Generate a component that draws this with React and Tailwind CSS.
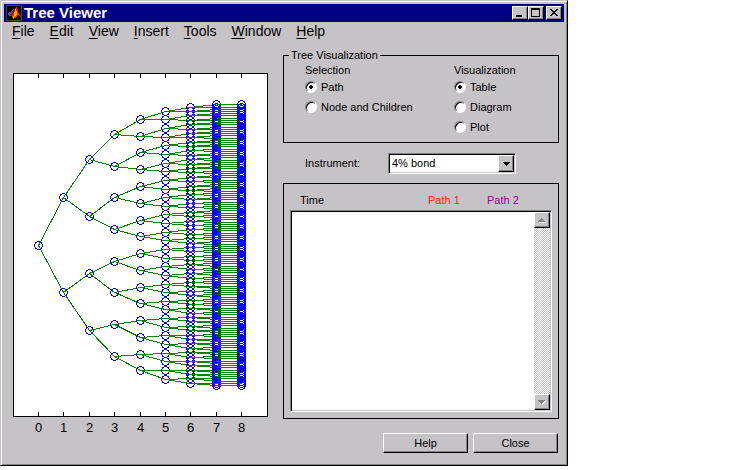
import React from "react";

const menus = ["File", "Edit", "View", "Insert", "Tools", "Window", "Help"];

const raised =
  "border border-t-white border-l-white border-r-black border-b-black bg-[#c6c3c6] shadow-[inset_-1px_-1px_0_#848284]";
const sunken =
  "border border-t-[#848284] border-l-[#848284] border-r-white border-b-white bg-white shadow-[inset_1px_1px_0_#000,inset_-1px_-1px_0_#c6c3c6]";

const columnX = [38, 63, 89, 114, 140, 165, 190, 216, 241];
const MID_Y = 244.7;
const SPREAD = 285;

// Nodes double at every level up to level 7; the last level keeps one child each.
function levelNodes(level) {
  const count = 2 ** Math.min(level, 7);
  return Array.from({ length: count }, (_, i) =>
    Math.round(MID_Y + ((i - (count - 1) / 2) * SPREAD) / (count + 1))
  );
}

const levels = columnX.map((x, level) => ({ x, ys: levelNodes(level) }));

function ringPath(x, y) {
  return (
    `M${x - 1} ${y - 4}h3v1h-3z` +
    `M${x - 3} ${y - 3}h2v1h-1v1h-1zM${x + 2} ${y - 3}h2v2h-1v-1h-1z` +
    `M${x - 4} ${y - 1}h1v3h-1zM${x + 4} ${y - 1}h1v3h-1z` +
    `M${x - 3} ${y + 2}h1v1h1v1h-2zM${x + 3} ${y + 2}h1v2h-2v-1h1z` +
    `M${x - 1} ${y + 4}h3v1h-3z`
  );
}

function branchPath(level) {
  const from = levels[level];
  const to = levels[level + 1];
  return to.ys
    .map((y, i) => {
      const parent = to.ys.length === from.ys.length ? i : Math.floor(i / 2);
      return `M${from.x + 0.5} ${from.ys[parent] + 0.5}L${to.x + 0.5} ${y + 0.5}`;
    })
    .join("");
}

function TreePlot() {
  return (
    <svg
      viewBox="13 73 255 364"
      className="block w-[255px] shrink-0"
      role="img"
      aria-label="Tree"
      shapeRendering="crispEdges"
    >
      <rect x="13.5" y="73.5" width="254" height="343" fill="#fff" stroke="#000" />
      {levels.map(({ x, ys }, level) => (
        <g key={level}>
          <path d={`M${x + 0.5} 74v4M${x + 0.5} 412v4`} stroke="#000" />
          <path d={ys.map((y) => ringPath(x, y)).join("")} fill="#0000ff" />
          {level < 8 && <path d={branchPath(level)} stroke="#008200" fill="none" />}
        </g>
      ))}
      {levels.map(({ x }, level) => (
        <text
          key={level}
          x={x + 0.5}
          y="432"
          textAnchor="middle"
          className="text-[13px]"
        >
          {level}
        </text>
      ))}
    </svg>
  );
}

function AppIcon() {
  return (
    <svg viewBox="0 0 16 16" className="h-4 w-4 shrink-0" shapeRendering="crispEdges" aria-hidden="true">
      <rect width="16" height="16" fill="#424142" />
      <rect x="1" y="1" width="14" height="14" fill="#000" />
      <path d="M1 9l3-2 2-2 2-1-2 6-2 1z" fill="#3161ce" />
      <path d="M5 8l3-4 2-2 1 2-3 7-2 1-2-2z" fill="#c60000" />
      <path d="M8 7l2-5 1 1 4 9-3-2-3 3-2 1-1-3z" fill="#ff2000" />
      <path d="M9 5l1-2 1 6-2 3-2 1z" fill="#ffc300" />
      <path d="M11 3l4 8-2-1z" fill="#840000" />
    </svg>
  );
}

function CaptionButton({ label, children }) {
  return (
    <button type="button" aria-label={label} className={`h-[14px] w-4 ${raised}`}>
      <svg viewBox="0 0 14 12" className="block h-3 w-[14px]" shapeRendering="crispEdges" fill="#000">
        {children}
      </svg>
    </button>
  );
}

function TitleBar() {
  return (
    <header className="flex h-[18px] items-center bg-[#000084] px-[2px] text-white">
      <AppIcon />
      <h1 className="flex-1 pl-[2px] text-[15px] leading-[18px] font-bold">Tree Viewer</h1>
      <div className="flex gap-[2px]">
        <div className="flex">
          <CaptionButton label="Minimize">
            <path d="M3 8h6v2H3z" />
          </CaptionButton>
          <CaptionButton label="Maximize">
            <path fillRule="evenodd" d="M2 1h9v9H2zM3 3v6h7V3z" />
          </CaptionButton>
        </div>
        <CaptionButton label="Close window">
          <path d="M3 2h2v1h1v1h2V3h1V2h2v1h-1v1H9v1H8v1h1v1h1v1h1v1H9V8H8V7H6v1H5v1H3V8h1V7h1V6h1V5H5V4H4V3H3z" />
        </CaptionButton>
      </div>
    </header>
  );
}

function Option({ name, label, checked }) {
  return (
    <label className="flex h-5 items-center gap-1">
      <input
        type="radio"
        name={name}
        defaultChecked={checked}
        className="h-3 w-3 appearance-none rounded-full border border-t-[#848284] border-l-[#848284] border-r-white border-b-white bg-white shadow-[inset_1px_1px_0_#000] checked:bg-[radial-gradient(circle,#000_2px,#fff_2px)]"
      />
      {label}
    </label>
  );
}

function OptionGroup({ title, name, options }) {
  return (
    <div role="radiogroup" aria-label={title}>
      <p className="leading-[14px]">{title}</p>
      {options.map((option, i) => (
        <Option key={option} name={name} label={option} checked={i === 0} />
      ))}
    </div>
  );
}

function ScrollButton({ label, down }) {
  return (
    <button type="button" aria-label={label} className={`flex h-4 w-4 items-center justify-center ${raised}`}>
      <svg viewBox="0 0 8 5" className="h-[5px] w-2" shapeRendering="crispEdges">
        <path d={down ? "M1 1h7v1h-1v1h-1v1h-1v1h-1z" : "M1 4h7v1h-7z"} fill="#fff" />
        <path
          d={down ? "M0 0h7v1h-1v1h-1v1h-1v1h-1v-1h-1v-1h-1v-1h-1z" : "M3 0h1v1h1v1h1v1h1v1h-7v-1h1v-1h1v-1h1z"}
          fill="#848284"
        />
      </svg>
    </button>
  );
}

function PathPanel() {
  return (
    <section className="mt-[9px] flex flex-1 flex-col border border-black px-[6px] pt-[9px] pb-[6px]">
      <div className="flex h-[17px] items-start pl-[10px] leading-[14px]">
        <span className="flex-1">Time</span>
        <span className="w-[59px] text-[#ff2800]">Path 1</span>
        <span className="w-[65px] text-[#9c009c]">Path 2</span>
      </div>
      <div className={`flex flex-1 p-px ${sunken}`}>
        <select
          multiple
          aria-label="Path values"
          className="min-w-0 flex-1 appearance-none bg-transparent outline-none"
        />
        <div className="flex flex-col justify-between bg-[repeating-conic-gradient(#c6c3c6_0_25%,#fff_0_50%)] bg-[length:2px_2px]">
          <ScrollButton label="Scroll up" />
          <ScrollButton label="Scroll down" down />
        </div>
      </div>
    </section>
  );
}

function Controls() {
  return (
    <form className="flex min-w-0 flex-1 flex-col text-[11px]" onSubmit={(e) => e.preventDefault()}>
      <fieldset className="h-[95px] border border-black pl-[21px]">
        <legend className="-ml-4 px-[2px] leading-[14px]">Tree Visualization</legend>
        <div className="flex pt-px">
          <div className="flex-1">
            <OptionGroup title="Selection" name="selection" options={["Path", "Node and Children"]} />
          </div>
          <div className="w-[104px]">
            <OptionGroup title="Visualization" name="visualization" options={["Table", "Diagram", "Plot"]} />
          </div>
        </div>
      </fieldset>

      <div className="mt-[10px] flex items-center pr-[43px] pl-[22px]">
        <label htmlFor="instrument" className="flex-1">
          Instrument:
        </label>
        <div className={`relative h-[21px] w-[128px] p-px ${sunken}`}>
          <select
            id="instrument"
            className="block h-full w-full appearance-none bg-transparent pl-[2px] outline-none"
          >
            <option>4% bond</option>
          </select>
          <span
            className={`pointer-events-none absolute inset-y-px right-px flex w-4 items-center justify-center ${raised}`}
          >
            <svg viewBox="0 0 7 4" className="h-1 w-[7px]" shapeRendering="crispEdges" aria-hidden="true">
              <path d="M0 0h7v1h-1v1h-1v1h-1v1h-1v-1h-1v-1h-1v-1h-1z" />
            </svg>
          </span>
        </div>
      </div>

      <PathPanel />

      <div className="mt-[14px] flex justify-end gap-[5px] pr-px">
        <button type="button" className={`h-5 w-[85px] ${raised}`}>
          Help
        </button>
        <button type="button" className={`h-5 w-[85px] ${raised}`}>
          Close
        </button>
      </div>
    </form>
  );
}

export default function App() {
  return (
    <main className="min-h-screen bg-white font-['Liberation_Sans',Arial,sans-serif] text-black">
      <div className="w-full max-w-[568px] border border-t-[#c6c3c6] border-l-[#c6c3c6] border-r-black border-b-black bg-[#c6c3c6] p-[3px] shadow-[inset_1px_1px_0_#fff,inset_-1px_-1px_0_#848284]">
        <TitleBar />
        <nav className="flex h-[18px] items-center gap-[15px] px-2 text-sm leading-[18px]">
          {menus.map((menu) => (
            <button key={menu} type="button">
              <span className="underline underline-offset-2">{menu[0]}</span>
              {menu.slice(1)}
            </button>
          ))}
        </nav>
        <div className="flex gap-[15px] pt-2 pr-[5px] pb-[9px] pl-[9px]">
          <div className="pt-[25px] pb-4">
            <TreePlot />
          </div>
          <Controls />
        </div>
      </div>
    </main>
  );
}
